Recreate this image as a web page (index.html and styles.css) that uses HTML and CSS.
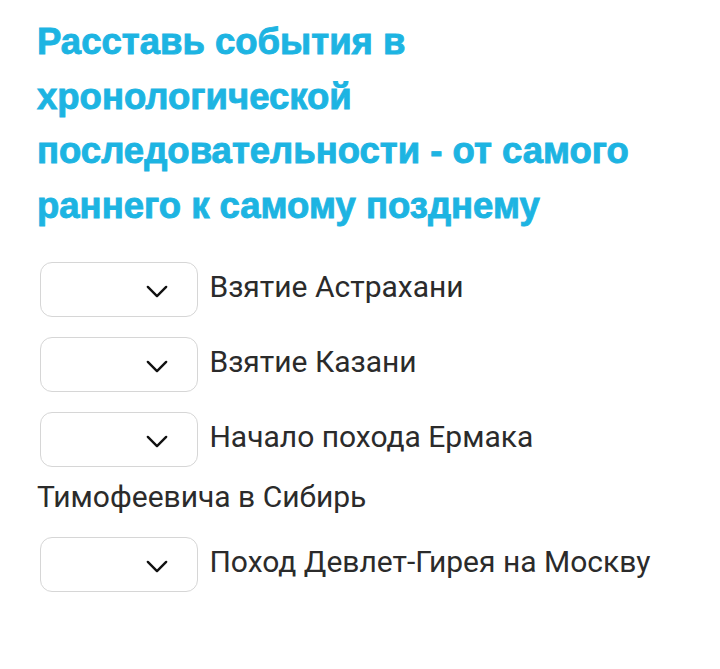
FILE: index.html
```html
<!DOCTYPE html>
<html lang="ru">
<head>
  <meta charset="UTF-8">
  <meta name="viewport" content="width=device-width, initial-scale=1.0">
  <title>Хронология</title>
  <link rel="stylesheet" href="styles.css">
</head>
<body>
  <div class="task">
    <h2>Расставь события в хронологической последовательности - от самого раннего к самому позднему</h2>

    <p class="item">
      <span class="pick"><svg viewBox="0 0 24 14" width="22" height="13"><path d="M2 2 L12 12 L22 2" /></svg></span>
      Взятие Астрахани
    </p>
    <p class="item">
      <span class="pick"><svg viewBox="0 0 24 14" width="22" height="13"><path d="M2 2 L12 12 L22 2" /></svg></span>
      Взятие Казани
    </p>
    <p class="item">
      <span class="pick"><svg viewBox="0 0 24 14" width="22" height="13"><path d="M2 2 L12 12 L22 2" /></svg></span>
      Начало похода Ермака Тимофеевича в Сибирь
    </p>
    <p class="item">
      <span class="pick"><svg viewBox="0 0 24 14" width="22" height="13"><path d="M2 2 L12 12 L22 2" /></svg></span>
      Поход Девлет-Гирея на Москву
    </p>
  </div>
</body>
</html>
```

FILE: styles.css
```css
body {
  margin: 0;
  background: #fff;
  font-family: 'Roboto', sans-serif;
  color: #2b2b2b;
}
.task {
  padding: 15px 0 0 37px;
}
h2 {
  margin: 0 0 24px;
  font-family: 'Liberation Sans', sans-serif;
  font-weight: bold;
  font-size: 36.5px;
  line-height: 54.5px;
  color: #1db4e2;
  -webkit-text-stroke: 0.9px #1db4e2;
}
.item {
  margin: 0 0 10px;
  font-size: 30px;
  line-height: 50px;
}
.pick {
  display: inline-block;
  box-sizing: border-box;
  width: 158px;
  height: 55px;
  margin: 5px 4px 5px 3px;
  border: 1px solid #d6d6d6;
  border-radius: 12px;
  vertical-align: middle;
  position: relative;
}
.pick svg {
  position: absolute;
  right: 29px;
  top: 22px;
  fill: none;
  stroke: #111;
  stroke-width: 2.6;
  stroke-linecap: round;
  stroke-linejoin: round;
}
```
